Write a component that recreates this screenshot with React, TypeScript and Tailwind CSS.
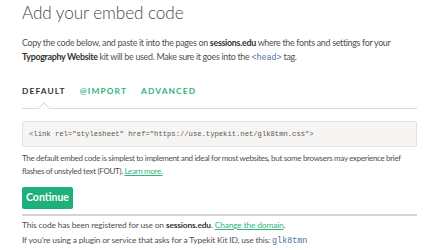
const sans = "font-['Lato','Open_Sans',sans-serif]";
const mono = "font-['Liberation_Mono','DejaVu_Sans_Mono',monospace]";

export default function App() {
    return (
        <div className={`w-[440px] h-[250px] bg-white overflow-hidden ${sans}`}>
            <div className="pl-[22px] pr-[23px]">
                <h1 className="pt-[2px] text-[17.2px] leading-[22px] font-light tracking-[-0.1px] text-[#4a4a4a]">Add your embed code</h1>

                <p className="mt-[12px] text-[8.9px] leading-[14px] tracking-[-0.3px] text-[#505050]">
                    Copy the code below, and paste it into the pages on <b className="font-bold text-[#333]">sessions.edu</b> where the fonts and settings for your{' '}
                    <b className="font-bold text-[#333]">Typography Website</b> kit will be used. Make sure it goes into the{' '}
                    <code className={`${mono} text-[8.4px] tracking-normal text-[#4f6fa0]`}>&lt;head&gt;</code> tag.
                </p>

                <div className="mt-[21px] flex gap-[14px] text-[8.4px] leading-[10px] font-bold tracking-[1.1px]">
                    <span className="text-[#333]">DEFAULT</span>
                    <span className="text-[#2eb67d]">@IMPORT</span>
                    <span className="text-[#2eb67d]">ADVANCED</span>
                </div>

                <div className="relative mt-[12px] h-px bg-[#dcdcdc]">
                    <div className="absolute left-[18px] -top-[4px] w-[8px] h-[8px] rotate-45 bg-white border-l border-t border-[#dcdcdc]" />
                </div>

                <div className="mt-[12px] h-[26px] flex items-center px-[6px] bg-[#f6f5f3] border border-[#e4e3e0] rounded-[2px]">
                    <span className={`${mono} text-[7.2px] text-[#555]`}>&lt;link rel="stylesheet" href="https://use.typekit.net/glk8tmn.css"&gt;</span>
                </div>

                <p className="mt-[5px] text-[8px] leading-[13px] tracking-[-0.32px] text-[#505050]">
                    The default embed code is simplest to implement and ideal for most websites, but some browsers may experience brief flashes of unstyled text (FOUT).{' '}
                    <a className="text-[#2eb67d] underline">Learn more.</a>
                </p>

                <button className="mt-[9px] h-[22px] w-[51px] bg-[#1eb07a] rounded-[2px] text-white text-[10.5px] font-bold">Continue</button>

                <div className="mt-[5px] h-[2px] bg-[#d4d4d4]" />

                <p className="mt-[2px] text-[8.4px] leading-[15px] tracking-[-0.15px] text-[#505050]">
                    This code has been registered for use on <b className="font-bold text-[#333]">sessions.edu</b>.{' '}
                    <a className="text-[#2eb67d] underline">Change the domain</a>.
                    <br />
                    If you're using a plugin or service that asks for a Typekit Kit ID, use this:{' '}
                    <code className={`${mono} text-[8.4px] tracking-normal text-[#4f6fa0]`}>glk8tmn</code>
                </p>
            </div>
        </div>
    );
}
